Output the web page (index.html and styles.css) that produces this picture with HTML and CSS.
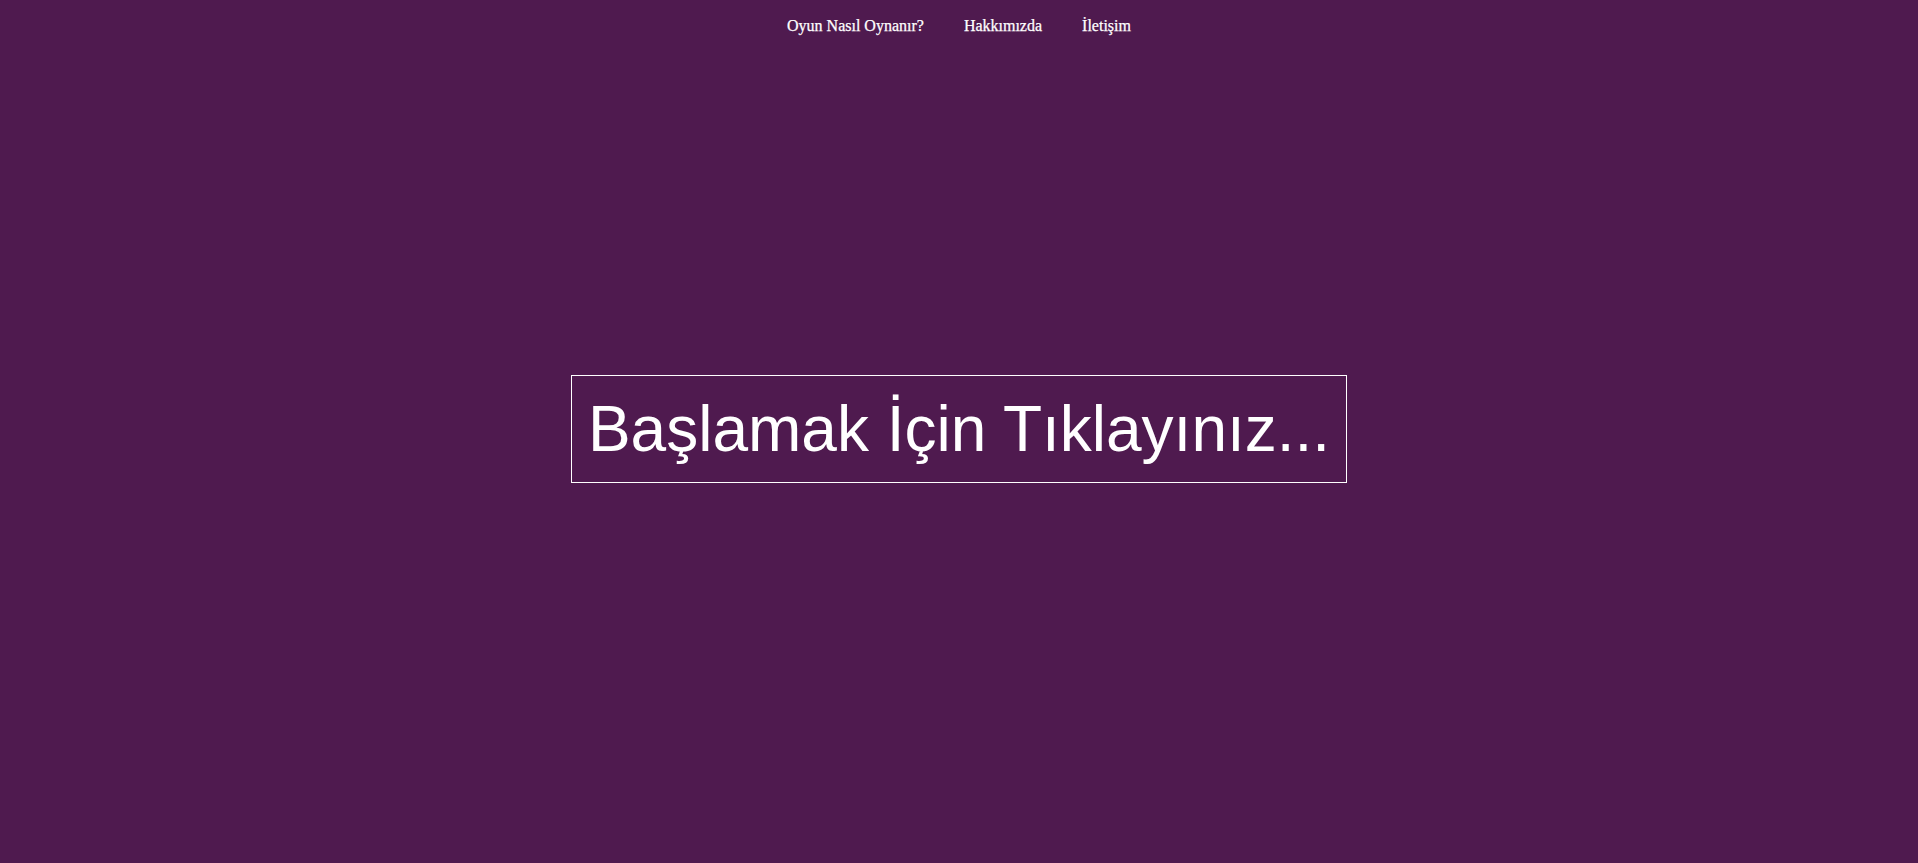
FILE: index.html
```html
<!DOCTYPE html>
<html lang="tr">
<head>
<meta charset="utf-8">
<title>Oyun</title>
<link rel="stylesheet" href="styles.css">
</head>
<body>
<nav class="nav">
  <a class="nav-link" href="#">Oyun Nasıl Oynanır?</a>
  <a class="nav-link" href="#">Hakkımızda</a>
  <a class="nav-link" href="#">İletişim</a>
</nav>
<main class="stage">
  <button class="start">Başlamak İçin Tıklayınız...</button>
</main>
</body>
</html>
```

FILE: styles.css
```css
html, body {
  margin: 0;
  height: 100%;
}
body {
  background: #4f1a4f;
  display: flex;
  flex-direction: column;
  font-family: "Liberation Serif", "Times New Roman", serif;
}
.nav {
  display: flex;
  justify-content: center;
  gap: 40px;
  padding-top: 17px;
  line-height: 18px;
  height: 18px;
}
.nav-link {
  color: #ffffff;
  text-decoration: none;
  font-size: 16px;
  font-weight: normal;
  -webkit-text-stroke: 0.25px #ffffff;
}
.stage {
  flex: 1;
  display: flex;
  align-items: center;
  justify-content: center;
  padding-bottom: 41px;
}
.start {
  background: transparent;
  color: #ffffff;
  border: 1px solid #ffffff;
  font-family: "Liberation Sans", Arial, sans-serif;
  font-size: 64px;
  line-height: normal;
  padding: 16px;
  margin: 0;
  cursor: pointer;
}
```
